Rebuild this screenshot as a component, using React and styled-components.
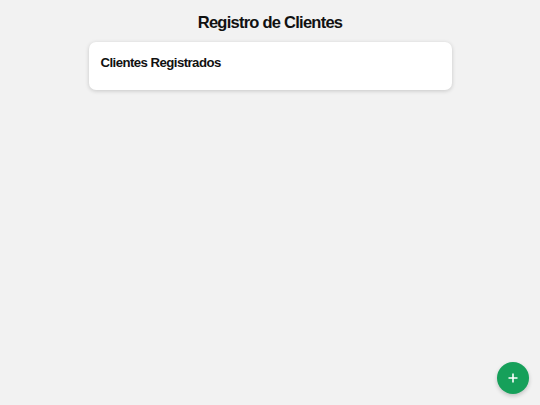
import styled, { createGlobalStyle } from "styled-components";

const GlobalStyle = createGlobalStyle`
  html, body {
    margin: 0;
    padding: 0;
    background: #f2f2f2;
    font-family: "Liberation Sans", Arial, sans-serif;
    color: #111;
  }
`;

const Page = styled.div`
  min-height: 405px;
  display: flex;
  flex-direction: column;
  align-items: center;
  padding-top: 11px;
  box-sizing: border-box;
`;

const Title = styled.h1`
  margin: 0 0 9px;
  font-size: 16.5px;
  font-weight: bold;
  line-height: 22px;
  letter-spacing: -0.75px;
`;

const Card = styled.section`
  width: 363px;
  height: 48px;
  box-sizing: border-box;
  background: #fff;
  border-radius: 7px;
  box-shadow: 0 1px 4px rgba(0, 0, 0, 0.18);
  padding: 12px 12px;
`;

const CardTitle = styled.h2`
  margin: 0;
  font-size: 13.2px;
  font-weight: bold;
  line-height: 17px;
  letter-spacing: -0.55px;
`;

const Fab = styled.button`
  position: fixed;
  right: 11px;
  bottom: 11px;
  width: 32px;
  height: 32px;
  border: none;
  border-radius: 50%;
  background: #16a05a;
  color: #fff;
  box-shadow: 0 2px 4px rgba(0, 0, 0, 0.2);
  display: flex;
  align-items: center;
  justify-content: center;
  padding: 0;
  cursor: pointer;
`;

export default function App() {
  return (
    <>
      <GlobalStyle />
      <Page>
        <Title>Registro de Clientes</Title>
        <Card>
          <CardTitle>Clientes Registrados</CardTitle>
        </Card>
      </Page>
      <Fab aria-label="Agregar cliente">
        <svg width="10" height="10" viewBox="0 0 10 10">
          <path d="M5 0.5v9M0.5 5h9" stroke="#fff" strokeWidth="1.6" />
        </svg>
      </Fab>
    </>
  );
}
